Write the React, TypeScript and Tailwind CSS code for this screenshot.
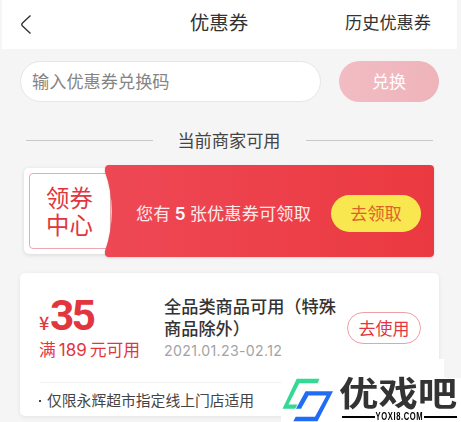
import type { ReactNode } from "react";

function SectionTitle({ children }: { children: ReactNode }) {
  return (
    <div className="mt-[26px] ml-[26px] flex h-6 w-[407px] items-center justify-between text-[17.2px] leading-6 text-[#444]">
      <span className="h-px w-[127px] bg-[#c9c9c9]" />
      <span className="pr-px">{children}</span>
      <span className="h-px w-[127px] bg-[#c9c9c9]" />
    </div>
  );
}

function CouponCenter() {
  return (
    <div className="relative mt-[13px] ml-6 flex h-[92px] w-[410px] items-center">
      <div className="h-[86px] w-[92px] rounded-[5px] bg-white p-[5px] shadow-[0_1px_4px_rgba(0,0,0,0.12)]">
        <div className="flex h-full flex-col justify-center rounded-[4px] border border-[#eda9ad] pl-4 text-[23.4px] leading-[27px] text-[#e2363f]">
          <span>领券</span>
          <span>中心</span>
        </div>
      </div>
      <svg
        className="absolute top-0 right-0 h-[92px] w-[330px] drop-shadow-[0_1px_1px_rgba(0,0,0,0.12)]"
        viewBox="0 0 330 92"
      >
        <defs>
          <linearGradient id="banner" x1="0" x2="1">
            <stop offset="0" stopColor="#ee4855" />
            <stop offset="1" stopColor="#eb3940" />
          </linearGradient>
        </defs>
        <path
          d="M4 0H326Q330 0 330 4V88Q330 92 326 92H4Q0 91 1 86C10 60 10 32 1 7Q0 1 4 0Z"
          fill="url(#banner)"
        />
      </svg>
      <div className="relative ml-5 flex flex-1 items-center justify-between pt-1 pr-[13px]">
        <span className="pt-px text-[17.2px] leading-6 tracking-[0.15px] whitespace-pre text-[#ffe9ea]">
          您有 <b className="font-['Inter'] font-semibold text-white">5</b> 张优惠券可领取
        </span>
        <button
          type="button"
          className="h-[37px] w-[90px] rounded-full bg-[#f8e74f] text-[17.2px] text-[#e0622b]"
        >
          去领取
        </button>
      </div>
    </div>
  );
}

function CouponCard() {
  return (
    <div className="mt-4 ml-5 h-[143px] w-[419px] rounded-[5px] bg-white shadow-[0_1px_4px_rgba(0,0,0,0.08)]">
      <div className="flex h-[109px] pl-[19px]">
        <div className="w-[125px] pt-[22px] text-[#e2363f]">
          <div className="flex h-[42px] items-baseline">
            <span className="w-[11px] text-[18px] leading-[42px] font-medium">¥</span>
            <span className="font-['Roboto'] text-[42.5px] leading-[42px] font-bold tracking-[-3px]">
              35
            </span>
          </div>
          <div className="text-[16.8px] leading-6 whitespace-nowrap">
            满<span className="mx-[3px] font-['Inter'] text-[17px]">189</span>元可用
          </div>
        </div>
        <div className="w-[183px] pt-[22px]">
          <div className="w-[176px] text-[17.2px] leading-[21.5px] font-medium text-[#333]">
            全品类商品可用（特殊商品除外）
          </div>
          <div className="font-['Inter'] text-[14.2px] leading-[26px] tracking-[0.3px] text-[#a3a3a3]">
            2021.01.23-02.12
          </div>
        </div>
        <button
          type="button"
          className="mt-[39px] h-8 w-[74px] rounded-full border border-[#eda0a5] pb-0.5 text-[17px] leading-none text-[#e2363f]"
        >
          去使用
        </button>
      </div>
      <div className="ml-5 flex border-t border-[#f1f1f1] pt-[5px] text-[14.8px] leading-6 text-[#444]">
        <span className="mt-[12px] mr-[7px] -ml-px size-0.5 bg-[#444]" />
        <span className="-ml-px">仅限永辉超市指定线上门店适用</span>
      </div>
    </div>
  );
}

function Watermark() {
  return (
    <div className="absolute top-[359px] left-[281px] h-[63px] w-[180px]">
      <div className="absolute inset-y-0 left-0 w-[163px] bg-white" />
      <div className="absolute inset-x-0 top-[19px] bottom-0 bg-white" />
      <svg className="absolute top-0 left-0 h-[63px] w-[180px]" viewBox="0 0 180 63">
        <path
          d="M15.7 19.8H38.5L36.7 24.2H18.3L7.5 45.5H16.5L14.2 49.7H1.5Z"
          fill="#35d995"
        />
        <path
          d="M24.5 32.2H52L36.5 62.2H12.3L14.7 57.8H34L45.5 36.5H27.5L20 49.7H15Z"
          fill="#216cf4"
        />
      </svg>
      <div className="absolute top-[13px] left-[58px] origin-center scale-y-[0.86] text-[39.4px] leading-[38px] font-bold whitespace-nowrap text-[#333]">
        优戏吧
      </div>
      <div className="absolute top-[53px] left-[61px] flex h-[10px] w-[115px] items-center">
        <span className="h-[1.5px] flex-1 bg-black" />
        <span className="flex w-[49px] justify-center">
          <span className="scale-x-[0.76] font-['Liberation_Sans'] text-[10px] leading-[10px] font-bold tracking-[0.8px] text-black">
            YOXI8.COM
          </span>
        </span>
        <span className="h-[1.5px] flex-1 bg-black" />
      </div>
    </div>
  );
}

export default function App() {
  return (
    <div className="relative h-[422px] w-[461px] overflow-hidden bg-[#f5f5f5] font-['Noto_Sans_CJK_SC',sans-serif]">
      <header className="mr-1 ml-0.5 flex h-[49px] items-center justify-between bg-white pr-[26px] pl-[18px] text-[#333]">
        <svg className="h-5 w-3" viewBox="0 0 12 20" fill="none" stroke="#333" strokeWidth="1.4">
          <path d="M10.5 0.5L2.5 8Q1 9.5 2.5 11L10.5 18.5" />
        </svg>
        <h1 className="ml-[61px] pb-1.5 text-[19.5px]">优惠券</h1>
        <span className="pb-1.5 text-[17.2px]">历史优惠券</span>
      </header>
      <div className="mt-3 ml-5 flex h-[41px] gap-[18px]">
        <div className="w-[301px] rounded-full border border-[#e6e6e6] bg-white pl-[11px] text-[17.2px] leading-[38px] text-[#858585]">
          输入优惠券兑换码
        </div>
        <button
          type="button"
          className="w-[100px] rounded-full bg-linear-to-r from-[#f2bcc3] to-[#eeb4ba] pb-0.5 text-[17px] text-white"
        >
          兑换
        </button>
      </div>
      <SectionTitle>当前商家可用</SectionTitle>
      <CouponCenter />
      <CouponCard />
      <Watermark />
    </div>
  );
}
